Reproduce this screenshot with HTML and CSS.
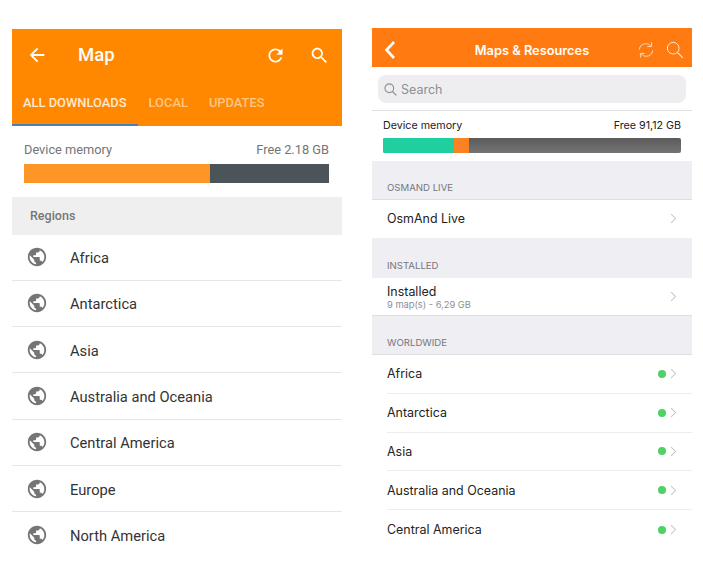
FILE: index.html
```html
<!DOCTYPE html>
<html lang="en">

<head>
    <meta charset="UTF-8">
    <meta name="viewport" content="width=device-width, initial-scale=1.0">
    <title>Map and Resources</title>
    <link rel="stylesheet" href="styles.css">
</head>

<body>
    <svg class="defs" width="0" height="0">
        <symbol id="globe" viewBox="0 0 24 24">
            <path d="M12 2C6.48 2 2 6.48 2 12s4.48 10 10 10 10-4.48 10-10S17.52 2 12 2zm-1 17.93c-3.95-.49-7-3.85-7-7.93 0-.62.08-1.21.21-1.79L9 15v1c0 1.1.9 2 2 2v1.93zm6.9-2.54c-.26-.81-1-1.39-1.9-1.39h-1v-3c0-.55-.45-1-1-1H8v-2h2c.55 0 1-.45 1-1V7h2c1.1 0 2-.9 2-2v-.41c2.93 1.19 5 4.06 5 7.41 0 2.08-.8 3.97-2.1 5.39z" />
        </symbol>
        <symbol id="chevron" viewBox="0 0 9 14">
            <path d="M1.5 1.5 7 7l-5.500 5.500" fill="none" stroke="currentColor" stroke-width="1.300" />
        </symbol>
    </svg>

    <!-- Android screen -->
    <section class="android">
        <header class="android-header">
            <div class="android-toolbar">
                <svg class="android-back" viewBox="0 0 24 24"><path d="M20 11H7.830l5.590-5.590L12 4l-8 8 8 8 1.410-1.410L7.830 13H20v-2z" /></svg>
                <h1 class="android-title">Map</h1>
                <svg class="android-refresh" viewBox="0 0 24 24"><path d="M17.650 6.350C16.200 4.900 14.210 4 12 4c-4.420 0-7.990 3.580-7.990 8s3.570 8 7.990 8c3.730 0 6.840-2.550 7.730-6h-2.080c-.82 2.330-3.040 4-5.650 4-3.310 0-6-2.690-6-6s2.690-6 6-6c1.660 0 3.140.69 4.220 1.780L13 11h7V4l-2.350 2.350z" /></svg>
                <svg class="android-search" viewBox="0 0 24 24"><path d="M15.500 14h-.79l-.28-.27C15.410 12.590 16 11.110 16 9.500 16 5.910 13.090 3 9.500 3S3 5.910 3 9.500 5.910 16 9.500 16c1.610 0 3.090-.59 4.230-1.570l.27.28v.79l5 4.990L20.490 19l-4.990-5zm-6 0C7.010 14 5 11.990 5 9.500S7.010 5 9.500 5 14 7.010 14 9.500 11.990 14 9.500 14z" /></svg>
            </div>
            <nav class="android-tabs">
                <span class="android-tab active">ALL DOWNLOADS</span>
                <span class="android-tab">LOCAL</span>
                <span class="android-tab">UPDATES</span>
            </nav>
        </header>

        <div class="android-memory">
            <div class="memory-labels">
                <span>Device memory</span>
                <span>Free 2.18 GB</span>
            </div>
            <div class="android-bar">
                <div class="android-used"></div>
            </div>
        </div>

        <div class="android-section">Regions</div>

        <ul class="android-list">
            <li><svg class="globe"><use href="#globe" /></svg>Africa</li>
            <li><svg class="globe"><use href="#globe" /></svg>Antarctica</li>
            <li><svg class="globe"><use href="#globe" /></svg>Asia</li>
            <li><svg class="globe"><use href="#globe" /></svg>Australia and Oceania</li>
            <li><svg class="globe"><use href="#globe" /></svg>Central America</li>
            <li><svg class="globe"><use href="#globe" /></svg>Europe</li>
            <li><svg class="globe"><use href="#globe" /></svg>North America</li>
        </ul>
    </section>

    <!-- iOS screen -->
    <section class="ios">
        <header class="ios-header">
            <svg class="ios-back" viewBox="0 0 12 20"><path d="M10 2 2.500 10l7.500 8" fill="none" stroke="currentColor" stroke-width="2.600" /></svg>
            <h1 class="ios-title">Maps &amp; Resources</h1>
            <svg class="ios-sync" viewBox="0 0 20 20">
                <path d="M2.500 9.500C3 5.500 6 3 9.700 3c2.300 0 4.300 1 5.600 2.700M17.500 10.500c-.5 4-3.500 6.500-7.200 6.500-2.300 0-4.300-1-5.600-2.700" fill="none" stroke="currentColor" stroke-width="1.100" />
                <path d="M16.200 1.500v4.700h-4.700M3.800 18.500v-4.700h4.700" fill="none" stroke="currentColor" stroke-width="1.100" />
            </svg>
            <svg class="ios-search" viewBox="0 0 20 20">
                <circle cx="8" cy="8" r="6.500" fill="none" stroke="currentColor" stroke-width="1.100" />
                <path d="m12.700 12.700 6 6" fill="none" stroke="currentColor" stroke-width="1.300" />
            </svg>
        </header>

        <div class="search-wrap">
            <div class="search-box">
                <svg class="search-icon" viewBox="0 0 14 14">
                    <circle cx="5.700" cy="5.700" r="4.700" fill="none" stroke="currentColor" stroke-width="1.200" />
                    <path d="m9 9 4.300 4.300" fill="none" stroke="currentColor" stroke-width="1.400" />
                </svg>
                Search
            </div>
        </div>

        <div class="ios-memory">
            <div class="memory-labels">
                <span>Device memory</span>
                <span>Free 91,12 GB</span>
            </div>
            <div class="ios-bar">
                <div class="ios-maps"></div>
                <div class="ios-other"></div>
            </div>
        </div>

        <div class="ios-section live">OSMAND LIVE</div>
        <div class="ios-row">OsmAnd Live<svg class="chevron"><use href="#chevron" /></svg></div>

        <div class="ios-section installed">INSTALLED</div>
        <div class="ios-row ios-row-sub">
            <div>
                <div class="ios-row-name">Installed</div>
                <div class="ios-row-note">9 map(s) - 6,29 GB</div>
            </div>
            <svg class="chevron"><use href="#chevron" /></svg>
        </div>

        <div class="ios-section worldwide">WORLDWIDE</div>
        <ul class="ios-list">
            <li><span class="ios-name">Africa</span><span class="dot"></span><svg class="chevron"><use href="#chevron" /></svg></li>
            <li><span class="ios-name">Antarctica</span><span class="dot"></span><svg class="chevron"><use href="#chevron" /></svg></li>
            <li><span class="ios-name">Asia</span><span class="dot"></span><svg class="chevron"><use href="#chevron" /></svg></li>
            <li><span class="ios-name">Australia and Oceania</span><span class="dot"></span><svg class="chevron"><use href="#chevron" /></svg></li>
            <li><span class="ios-name">Central America</span><span class="dot"></span><svg class="chevron"><use href="#chevron" /></svg></li>
        </ul>
    </section>
</body>

</html>
```

FILE: styles.css
```css
body {
    margin: 0;
    height: 576px;
    overflow: hidden;
    background-color: white;
    display: flex;
    align-items: flex-start;
    padding-left: 12px;
    box-sizing: border-box;
}

ul {
    list-style: none;
    margin: 0;
    padding: 0;
}

h1 {
    margin: 0;
    font-weight: 500;
}

.defs {
    position: absolute;
}

.memory-labels {
    display: flex;
    justify-content: space-between;
}

/* Android screen */

.android {
    width: 330px;
    margin-top: 29px;
    font-family: Roboto, "Noto Sans", sans-serif;
}

.android-header {
    height: 97px;
    background-color: #ff8800;
    color: white;
}

.android-toolbar {
    height: 52px;
    display: flex;
    align-items: center;
}

.android-toolbar svg {
    fill: white;
}

.android-back {
    width: 22px;
    height: 22px;
    margin-left: 14px;
}

.android-title {
    font-size: 18.500px;
    margin-left: 30px;
    flex: 1;
}

.android-refresh {
    width: 21px;
    height: 21px;
}

.android-search {
    width: 21px;
    height: 21px;
    margin-left: 23px;
    margin-right: 12px;
}

.android-tabs {
    display: flex;
    height: 45px;
}

.android-tab {
    font-size: 12.900px;
    font-weight: 500;
    line-height: 43px;
    margin-left: 21px;
    color: #ffc680;
}

.android-tab.active {
    color: #ffe9d0;
    margin-left: 0;
    padding: 0 11px;
    height: 43px;
    border-bottom: 2px solid #4d7fb5;
}

.android-tab.active + .android-tab {
    margin-left: 11px;
}

.android-memory {
    height: 71px;
    padding: 16px 13px 0 12px;
    box-sizing: border-box;
    font-size: 12.800px;
    color: #757575;
}

.android-bar {
    height: 19px;
    margin-top: 7px;
    background-color: #4a5459;
}

.android-used {
    width: 61%;
    height: 100%;
    background-color: #fd9527;
}

.android-section {
    height: 37.500px;
    line-height: 37px;
    padding-left: 18px;
    font-size: 12.500px;
    font-weight: 500;
    color: #777777;
    background-color: #efefef;
}

.android-list li {
    height: 46.300px;
    box-sizing: border-box;
    padding-top: 2px;
    display: flex;
    align-items: center;
    font-size: 14.700px;
    color: #333333;
    border-bottom: 1px solid #e6e6e6;
}

.android-list li:last-child {
    border-bottom: none;
}

.globe {
    width: 22px;
    height: 22px;
    margin-left: 14px;
    margin-right: 22px;
    margin-top: -2px;
    fill: #757575;
}

/* iOS screen */

.ios {
    width: 320px;
    margin-left: 30px;
    margin-top: 28px;
    font-family: Inter, "Noto Sans", sans-serif;
    color: #222222;
}

.ios-header {
    height: 39px;
    padding-top: 5px;
    box-sizing: border-box;
    background-color: #ff7b11;
    color: white;
    display: flex;
    align-items: center;
}

.ios-back {
    width: 12px;
    height: 20px;
    margin-left: 12px;
}

.ios-title {
    flex: 1;
    text-align: center;
    font-size: 12.800px;
    font-weight: 600;
    padding-left: 31px;
}

.ios-sync {
    width: 18px;
    height: 18px;
    color: #ffd9b5;
}

.ios-search {
    width: 18px;
    height: 18px;
    margin-left: 11px;
    margin-right: 8px;
    color: #ffe6d0;
}

.search-wrap {
    height: 44px;
    padding: 8px 6px 0;
    box-sizing: border-box;
    border-bottom: 1px solid #e2e2e4;
    background-color: white;
}

.search-box {
    height: 28px;
    border-radius: 8px;
    background-color: #eeeef0;
    display: flex;
    align-items: center;
    color: #8e8e93;
    font-size: 12.500px;
}

.search-icon {
    width: 13px;
    height: 13px;
    margin-left: 6px;
    margin-right: 4px;
}

.ios-memory {
    height: 50px;
    padding: 8px 11px 0;
    box-sizing: border-box;
    font-size: 10.700px;
}

.ios-bar {
    height: 15px;
    margin-top: 6px;
    display: flex;
    border-radius: 2px;
    overflow: hidden;
    background: linear-gradient(#5b5b5b, #747474);
}

.ios-maps {
    width: 71px;
    background-color: #1fcf9f;
}

.ios-other {
    width: 15px;
    background-color: #fb8222;
}

.ios-section {
    box-sizing: border-box;
    font-size: 9.600px;
    color: #77777c;
    background-color: #eeeef3;
}

.ios-section.live {
    height: 39px;
    padding: 21px 0 0 15px;
    border-bottom: 1px solid #dedee2;
}

.ios-section.installed {
    height: 40px;
    padding: 22px 0 0 15px;
}

.ios-section.worldwide {
    height: 39px;
    padding: 21px 0 0 15px;
    border-bottom: 1px solid #dedee2;
}

.ios-row {
    height: 37.500px;
    display: flex;
    align-items: center;
    justify-content: space-between;
    padding-left: 15px;
    font-size: 12.450px;
}

.ios-row-sub {
    border-bottom: 1px solid #dedee2;
    height: 38.500px;
    box-sizing: border-box;
}

.ios-row-sub > div {
    padding-top: 3px;
}

.ios-row-name {
    font-size: 12.450px;
    line-height: 14px;
}

.ios-row-note {
    font-size: 9.300px;
    line-height: 12px;
    color: #8e8e93;
}

.ios-list li {
    height: 38.800px;
    box-sizing: border-box;
    display: flex;
    align-items: center;
    margin-left: 15px;
    font-size: 12.450px;
    border-bottom: 1px solid #ececee;
}

.ios-list li:last-child {
    border-bottom: none;
}

.ios-name {
    flex: 1;
}

.dot {
    width: 8px;
    height: 8px;
    border-radius: 50%;
    background-color: #4fd165;
}

.chevron {
    width: 7px;
    height: 11px;
    margin-left: 4px;
    margin-right: 15px;
    color: #c4c4c7;
}
```
